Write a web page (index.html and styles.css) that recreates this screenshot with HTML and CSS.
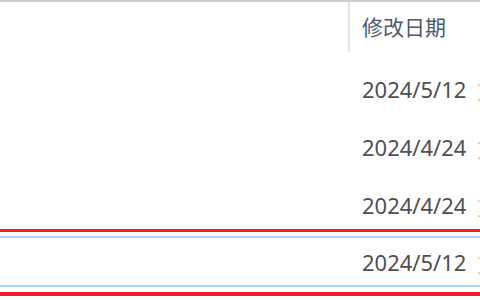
FILE: index.html
```html
<html>
  <head>
    <meta charset="utf-8">
    <link rel="stylesheet" href="styles.css">
  </head>
  <body>
    <div class="list">
        <!-- 列ヘッダー -->
        <div class="header">
            <div class="col-name"></div>
            <div class="col-date">修改日期</div>
        </div>
        <!-- ファイル行 -->
        <div class="row">
            <div class="col-name"></div>
            <div class="col-date">2024/5/12</div>
            <div class="col-type">文</div>
        </div>
        <div class="row">
            <div class="col-name"></div>
            <div class="col-date">2024/4/24</div>
            <div class="col-type">文</div>
        </div>
        <div class="row">
            <div class="col-name"></div>
            <div class="col-date">2024/4/24</div>
            <div class="col-type">文</div>
        </div>
        <div class="row selected">
            <div class="col-name"></div>
            <div class="col-date">2024/5/12</div>
            <div class="col-type">文</div>
        </div>
        <!-- 赤枠の注釈 -->
        <div class="mark"></div>
    </div>
  </body>
</html>
```

FILE: styles.css
```css
* {
  margin: 0;
  padding: 0;
  box-sizing: border-box;
}
body {
    background-color: #fff;
    width: 480px;
    height: 300px;
    overflow: hidden;
    font-family: "Noto Sans", "Noto Sans CJK SC", sans-serif;
}
.list {
    position: relative;
    border-top: 2px solid #c6d0d4;
}
.header {
    display: flex;
    height: 58px;
    align-items: flex-start;
}
.header .col-name {
    width: 348px;
    flex: none;
}
.header .col-date {
    height: 50px;
    line-height: 50px;
    border-left: 2px solid #e3e3e3;
    padding-left: 12px;
    font-size: 21px;
    color: #4a5a70;
}
.row {
    display: flex;
    align-items: center;
    height: 58px;
    white-space: nowrap;
}
.row .col-name {
    width: 362px;
    flex: none;
}
.row .col-date {
    width: 115px;
    flex: none;
    font-size: 22px;
    color: #4f4f4f;
}
.row .col-type {
    font-size: 22px;
    color: #e6cf88;
}
/* 選択中の行 */
.row.selected {
    height: 51px;
    margin-top: 2px;
    border-top: 2px solid #a8d5fb;
    border-bottom: 2px solid #a8d5fb;
}
/* 赤い枠 */
.mark {
    position: absolute;
    top: 227px;
    left: -10px;
    right: -10px;
    height: 67px;
    border-top: 3px solid #ee1d2b;
    border-bottom: 4px solid #ee1d2b;
}
```
